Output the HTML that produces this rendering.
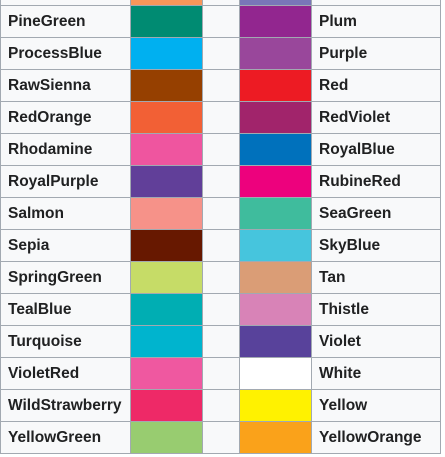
<!DOCTYPE html>
<html><head><meta charset="utf-8"><style>
html,body{margin:0;padding:0;width:445px;height:457px;background:#fff;overflow:hidden}
.c{position:absolute;box-sizing:border-box}
.t{position:absolute;font-family:"Liberation Sans","Noto Sans CJK SC",sans-serif;font-weight:bold;font-size:15.5px;color:#202122;line-height:32px;white-space:nowrap}
</style></head><body>
<div id="g"></div>
<script>
var rows=[["PineGreen","#008B72","#92268F","Plum"],["ProcessBlue","#00B0F0","#99479B","Purple"],["RawSienna","#964000","#ED1B23","Red"],["RedOrange","#F26035","#A1246B","RedViolet"],["Rhodamine","#EF559F","#0071BC","RoyalBlue"],["RoyalPurple","#613F99","#ED017D","RubineRed"],["Salmon","#F69289","#3FBC9D","SeaGreen"],["Sepia","#671800","#46C5DD","SkyBlue"],["SpringGreen","#C6DC67","#DA9D76","Tan"],["TealBlue","#00AEB3","#D883B7","Thistle"],["Turquoise","#00B4CE","#58429B","Violet"],["VioletRed","#EF58A0","#FFFFFF","White"],["WildStrawberry","#EE2967","#FFF200","Yellow"],["YellowGreen","#98CC70","#FAA21A","YellowOrange"]];
var h='';
h+='<div class="c" style="left:0;top:0;width:441px;height:454px;background:#f8f9fa"></div>';
h+='<div class="c" style="left:131px;top:0;width:71px;height:5px;background:#F7965A"></div>';
h+='<div class="c" style="left:240px;top:0;width:71px;height:5px;background:#7977B8"></div>';
for(var i=0;i<rows.length;i++){var y=6+i*32,r=rows[i];
h+='<div class="t" style="left:8px;top:'+y+'px">'+r[0]+'</div>';
h+='<div class="c" style="left:131px;top:'+y+'px;width:71px;height:31px;background:'+r[1]+'"></div>';
h+='<div class="c" style="left:240px;top:'+y+'px;width:71px;height:31px;background:'+r[2]+'"></div>';
h+='<div class="t" style="left:319px;top:'+y+'px">'+r[3]+'</div>';}
for(var i=0;i<=14;i++){h+='<div class="c" style="left:0;top:'+(5+i*32)+'px;width:441px;height:1px;background:#a2a9b1"></div>';}
[0,130,202,239,311,440].forEach(function(x){h+='<div class="c" style="left:'+x+'px;top:0;width:1px;height:454px;background:#a2a9b1"></div>';});
document.getElementById('g').innerHTML=h;
</script>
</body></html>
